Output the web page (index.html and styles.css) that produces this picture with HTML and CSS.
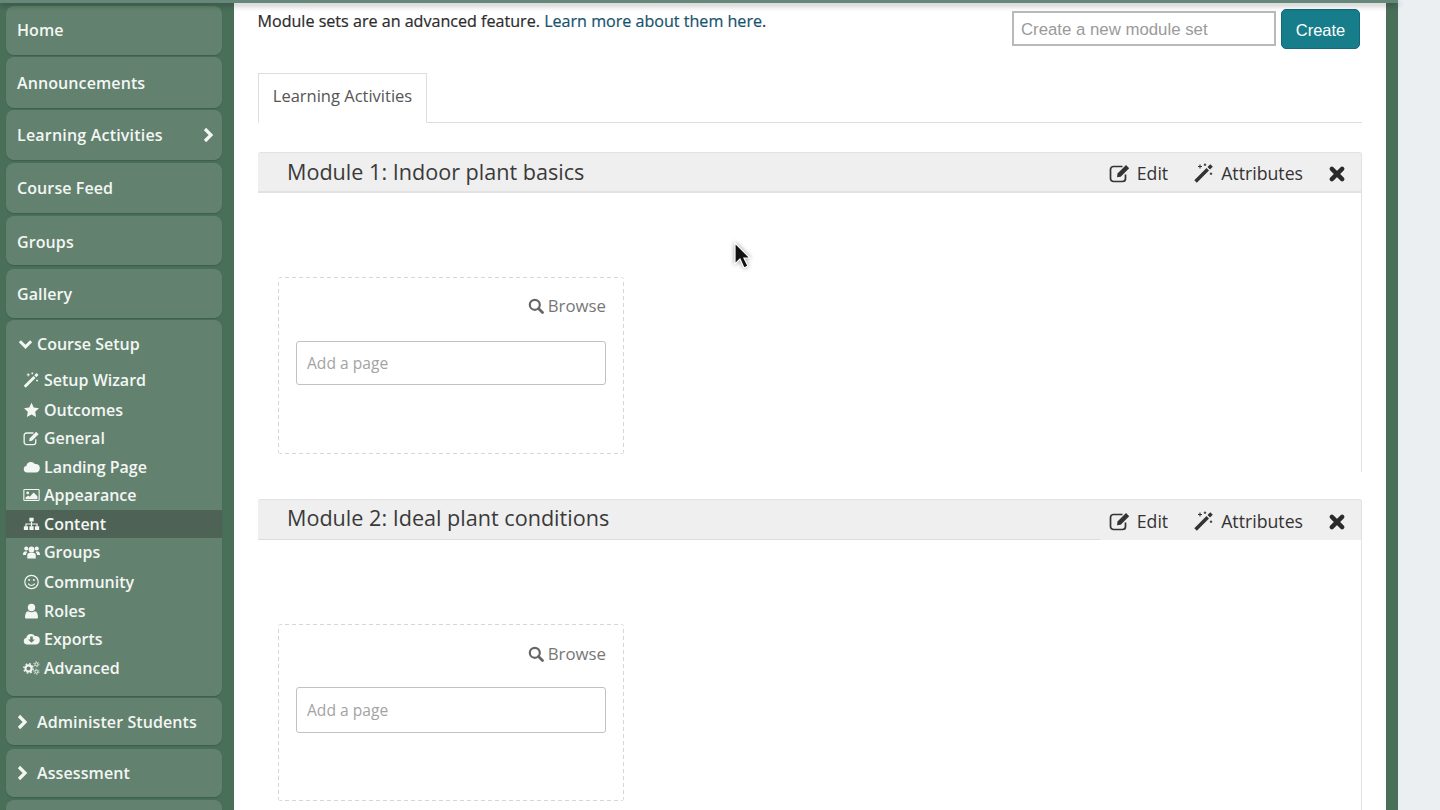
FILE: index.html
```html
<!DOCTYPE html>
<html lang="en">
<head>
    <meta charset="UTF-8">
    <title>Course Setup - Content</title>
    <link rel="stylesheet" href="styles.css">
</head>
<body>
    <svg class="icon-defs" width="0" height="0">
        <symbol id="i-right" viewBox="0 0 12 16"><path d="M3 2l6 6-6 6" fill="none" stroke="currentColor" stroke-width="3.2"/></symbol>
        <symbol id="i-down" viewBox="0 0 16 12"><path d="M2 3l6 6 6-6" fill="none" stroke="currentColor" stroke-width="3.2"/></symbol>
        <symbol id="i-wand" viewBox="0 0 20 20"><path d="M.3 17.200L12.500 5 15 7.500 2.800 19.700zM13.500 4l2.800-2.800 2.500 2.500-2.800 2.800z" fill="currentColor"/><path d="M6 1.500v4M4 3.500h4M11 .5v2.500M9.800 1.700h2.400M17 9.500v2.500M15.800 10.700h2.400" stroke="currentColor" stroke-width="1.100"/></symbol>
        <symbol id="i-star" viewBox="0 0 20 20"><path d="M10 1l2.800 5.900 6.500.9-4.700 4.500 1.200 6.400L10 15.600l-5.800 3.100 1.200-6.400L.7 7.800l6.500-.9z" fill="currentColor"/></symbol>
        <symbol id="i-edit" viewBox="0 0 22 20"><path d="M16.500 11.500v4a3 3 0 0 1-3 3h-9a3 3 0 0 1-3-3v-9a3 3 0 0 1 3-3h9" fill="none" stroke="currentColor" stroke-width="1.700"/><path d="M8.500 10.500L17 2l3.200 3.200-8.500 8.500-3.700.6z" fill="currentColor"/></symbol>
        <symbol id="i-cloud" viewBox="0 0 20 16"><path d="M5 14.500a4 4 0 0 1-1-7.900A5.500 5.500 0 0 1 14 4.500a3.500 3.500 0 0 1 1.700.1A5 5 0 0 1 15 14.500z" fill="currentColor"/></symbol>
        <symbol id="i-image" viewBox="0 0 20 16"><rect x="1" y="1.500" width="18" height="13" rx="1" fill="none" stroke="currentColor" stroke-width="1.300"/><circle cx="5.500" cy="5.500" r="1.600" fill="currentColor"/><path d="M3 13v-2l3-2.500 2 1.500 4.500-5 4.500 4.500V13z" fill="currentColor"/></symbol>
        <symbol id="i-sitemap" viewBox="0 0 20 16"><path d="M7.500 .5h5V5h-5zM1 10.500h5V15H1zM7.500 10.500h5V15h-5zM14 10.500h5V15h-5z" fill="currentColor"/><path d="M3.500 11V8h13v3M10 5v6" fill="none" stroke="currentColor" stroke-width="1.400"/></symbol>
        <symbol id="i-users" viewBox="0 0 20 16"><circle cx="10" cy="5" r="3.400" fill="currentColor"/><circle cx="3.800" cy="3.800" r="2.400" fill="currentColor"/><circle cx="16.200" cy="3.800" r="2.400" fill="currentColor"/><path d="M5 15.500v-4c0-1.800 1.700-3 5-3s5 1.200 5 3v4zM0 10.500c0-2.300 1.300-3.500 4-3.500l1 1.200c-1 .8-1.500 1.700-1.500 3.300H0zM20 10.500c0-2.300-1.300-3.500-4-3.500l-1 1.200c1 .8 1.500 1.700 1.500 3.300H20z" fill="currentColor"/></symbol>
        <symbol id="i-smile" viewBox="0 0 16 16"><circle cx="8" cy="8" r="6.700" fill="none" stroke="currentColor" stroke-width="1.200"/><circle cx="5.600" cy="6" r="1" fill="currentColor"/><circle cx="10.400" cy="6" r="1" fill="currentColor"/><path d="M4.700 9.700c1.700 2.300 4.900 2.300 6.600 0" fill="none" stroke="currentColor" stroke-width="1.100"/></symbol>
        <symbol id="i-user" viewBox="0 0 14 16"><circle cx="7" cy="4.500" r="3.700" fill="currentColor"/><path d="M1.500 15.500a1 1 0 0 1-1-1c0-3.500 1-6 3.200-6.300 1.800 1.300 4.800 1.300 6.600 0 2.200.3 3.200 2.800 3.200 6.300a1 1 0 0 1-1 1z" fill="currentColor"/></symbol>
        <symbol id="i-export" viewBox="0 0 20 16"><path fill-rule="evenodd" d="M5 14.500a4 4 0 0 1-1-7.900A5.500 5.500 0 0 1 14 4.500a3.500 3.500 0 0 1 1.700.1A5 5 0 0 1 15 14.500zM8.500 5v3.500H6l4 4 4-4h-2.500V5z" fill="currentColor"/></symbol>
        <symbol id="i-cogs" viewBox="0 0 20 16"><circle cx="6.500" cy="8.500" r="3.600" fill="none" stroke="currentColor" stroke-width="2.400"/><circle cx="6.500" cy="8.500" r="5.500" fill="none" stroke="currentColor" stroke-width="1.600" stroke-dasharray="2.100 2.220"/><circle cx="15.800" cy="3.600" r="1.700" fill="none" stroke="currentColor" stroke-width="1.100"/><circle cx="15.800" cy="3.600" r="3" fill="none" stroke="currentColor" stroke-width="1" stroke-dasharray="1.500 1.640"/><circle cx="15.800" cy="12.400" r="1.700" fill="none" stroke="currentColor" stroke-width="1.100"/><circle cx="15.800" cy="12.400" r="3" fill="none" stroke="currentColor" stroke-width="1" stroke-dasharray="1.500 1.640"/></symbol>
        <symbol id="i-search" viewBox="0 0 16 16"><circle cx="6.800" cy="6.800" r="5" fill="none" stroke="currentColor" stroke-width="2.200"/><path d="M10.500 10.500l4 4" stroke="currentColor" stroke-width="2.800" stroke-linecap="round"/></symbol>
        <symbol id="i-close" viewBox="0 0 14 14"><path d="M2.500 2.500l9 9M11.500 2.500l-9 9" stroke="currentColor" stroke-width="3.800" stroke-linecap="round"/></symbol>
    </svg>

    <div class="topbar"></div>

    <div class="page">
        <nav class="sidebar">
            <a class="tile tile-home">Home</a>
            <a class="tile tile-ann">Announcements</a>
            <a class="tile tile-la">Learning Activities <svg class="caret-end"><use href="#i-right"/></svg></a>
            <a class="tile tile-feed">Course Feed</a>
            <a class="tile tile-groups">Groups</a>
            <a class="tile tile-gallery">Gallery</a>

            <div class="tile-group">
                <div class="group-title"><svg class="caret-down"><use href="#i-down"/></svg> Course Setup</div>
                <a class="sub sub-wizard"><svg class="sub-icon"><use href="#i-wand"/></svg>Setup Wizard</a>
                <a class="sub sub-outcomes"><svg class="sub-icon"><use href="#i-star"/></svg>Outcomes</a>
                <a class="sub sub-general"><svg class="sub-icon"><use href="#i-edit"/></svg>General</a>
                <a class="sub"><svg class="sub-icon"><use href="#i-cloud"/></svg>Landing Page</a>
                <a class="sub"><svg class="sub-icon"><use href="#i-image"/></svg>Appearance</a>
                <a class="sub active"><svg class="sub-icon"><use href="#i-sitemap"/></svg>Content</a>
                <a class="sub"><svg class="sub-icon"><use href="#i-users"/></svg>Groups</a>
                <a class="sub sub-community"><svg class="sub-icon"><use href="#i-smile"/></svg>Community</a>
                <a class="sub"><svg class="sub-icon"><use href="#i-user"/></svg>Roles</a>
                <a class="sub"><svg class="sub-icon"><use href="#i-export"/></svg>Exports</a>
                <a class="sub"><svg class="sub-icon"><use href="#i-cogs"/></svg>Advanced</a>
            </div>

            <a class="tile tile-admin"><svg class="caret-start"><use href="#i-right"/></svg>Administer Students</a>
            <a class="tile tile-assess"><svg class="caret-start"><use href="#i-right"/></svg>Assessment</a>
            <a class="tile tile-last"></a>
        </nav>

        <main class="content">
            <div class="intro">
                <p class="intro-text">Module sets are an advanced feature. <a class="link">Learn more about them here</a>.</p>
                <div class="new-set">
                    <input class="new-set-input" type="text" placeholder="Create a new module set">
                    <button class="btn-create">Create</button>
                </div>
            </div>

            <div class="tabs">
                <div class="tab">Learning Activities</div>
            </div>

            <section class="module module-first">
                <header class="module-head">
                    <h2 class="module-title">Module 1: Indoor plant basics</h2>
                    <div class="module-actions">
                        <a class="action action-edit"><svg class="action-icon"><use href="#i-edit"/></svg>Edit</a>
                        <a class="action action-attr"><svg class="action-icon"><use href="#i-wand"/></svg>Attributes</a>
                        <a class="action-close"><svg class="close-icon"><use href="#i-close"/></svg></a>
                    </div>
                </header>
                <div class="module-body">
                    <div class="dropzone">
                        <a class="browse"><svg class="browse-icon"><use href="#i-search"/></svg>Browse</a>
                        <input class="page-input" type="text" placeholder="Add a page">
                    </div>
                </div>
            </section>

            <section class="module module-second">
                <header class="module-head">
                    <h2 class="module-title">Module 2: Ideal plant conditions</h2>
                    <div class="module-actions">
                        <a class="action action-edit"><svg class="action-icon"><use href="#i-edit"/></svg>Edit</a>
                        <a class="action action-attr"><svg class="action-icon"><use href="#i-wand"/></svg>Attributes</a>
                        <a class="action-close"><svg class="close-icon"><use href="#i-close"/></svg></a>
                    </div>
                </header>
                <div class="module-body">
                    <div class="dropzone">
                        <a class="browse"><svg class="browse-icon"><use href="#i-search"/></svg>Browse</a>
                        <input class="page-input" type="text" placeholder="Add a page">
                    </div>
                </div>
            </section>
        </main>

        <div class="edge-stripe"></div>
        <div class="page-bg"></div>
    </div>

    <!-- mouse pointer captured in the recording -->
    <svg class="cursor" width="18" height="30" viewBox="0 0 18 30">
        <path d="M2 1v21l5-5 4 9 4-2-4-8h6z" fill="#111" stroke="#fff" stroke-width="1.200"/>
    </svg>
</body>
</html>
```

FILE: styles.css
```css
* { box-sizing: border-box; }
html, body { height: 810px; overflow: hidden; }
body { margin: 0; background: #eceff2; font-family: "Open Sans", sans-serif; color: #333; }
.icon-defs { position: absolute; }

.topbar { position: relative; z-index: 2; width: 1398px; height: 3px; background: #66887a; box-shadow: 0 2px 6px rgba(0,0,0,0.4); }
.page { display: flex; height: 807px; }

/* sidebar */
.sidebar { width: 234px; flex: none; background: #4a6f59; padding: 3px 12px 0 6px; display: flex; flex-direction: column; }
.tile { display: flex; align-items: center; padding-left: 11px; flex: none; background: #62826f; border-radius: 8px; box-shadow: 0 1px 1px rgba(40,70,50,0.35); color: #f4f6f4; font-size: 16px; font-weight: 600; letter-spacing: 0.1px; }
.tile-home { height: 49px; margin-bottom: 2px; padding-bottom: 2px; }
.tile-ann { height: 51px; margin-bottom: 2px; }
.tile-la { height: 50px; margin-bottom: 3px; position: relative; letter-spacing: 0.2px; }
.tile-feed { height: 50px; margin-bottom: 3px; }
.tile-groups { height: 49px; margin-bottom: 4px; padding-top: 2px; }
.tile-gallery { height: 49px; margin-bottom: 2px; }
.tile-admin { height: 47px; margin-top: 2px; margin-bottom: 4px; }
.tile-assess { height: 48px; margin-bottom: 3px; }
.tile-last { height: 48px; }
.caret-end { position: absolute; right: 8px; top: 17px; width: 12px; height: 16px; }
.caret-start { width: 12px; height: 16px; margin-right: 9px; margin-left: -1px; }

.tile-group { flex: none; height: 376px; background: #62826f; border-radius: 8px; box-shadow: 0 1px 1px rgba(40,70,50,0.35); color: #f4f6f4; font-weight: 600; }
.group-title { display: flex; align-items: center; height: 47px; padding: 0 0 0 12px; font-size: 16px; }
.caret-down { width: 15px; height: 12px; margin-right: 4px; }
.sub { display: flex; align-items: center; height: 28.500px; padding-left: 17px; font-size: 16px; }
.sub-wizard { height: 30px; margin-top: -2px; }
.sub-outcomes { height: 29px; }
.sub-community { height: 30px; }
.sub.active { background: #4e6356; }
.sub-icon { width: 17px; height: 16px; margin-right: 4px; flex: none; }

/* main column */
.content { width: 1152px; flex: none; background: #fff; padding: 0 24px; }
.intro { display: flex; justify-content: space-between; height: 70px; }
.intro-text { margin: 7px 0 0 -0.5px; font-size: 16.100px; line-height: 22px; color: #2b2b2b; -webkit-text-stroke: 0.2px; }
.link { color: #14536f; }
.new-set { display: flex; align-items: flex-start; padding: 6px 2px 0 0; gap: 5px; }
.new-set-input { width: 264px; height: 35px; margin-top: 2px; border: 2px solid #b9b9b9; padding: 2px 7px 0; font-family: "Liberation Sans", sans-serif; font-size: 16.800px; }
.new-set-input::placeholder { color: #9a9a9a; opacity: 1; }
.btn-create { width: 79px; height: 40px; background: #177d8a; border: 1px solid #11697a; border-radius: 5px; color: #fff; font-family: "Liberation Sans", sans-serif; font-size: 16.500px; padding: 2px 0 0; }

.tabs { height: 50px; border-bottom: 1px solid #ddd; width: 1104px; }
.tab { width: 169px; height: 50px; background: #fff; border: 1px solid #ddd; border-bottom-color: #fff; padding-top: 11px; text-align: center; font-size: 16.500px; line-height: 22px; color: #555; }

/* modules */
.module { width: 1104px; }
.module-first { margin-top: 29px; }
.module-second { margin-top: 27px; }
.module-head { display: flex; justify-content: space-between; align-items: center; height: 41px; background: #efefef; border-radius: 3px 3px 0 0; border-top: 1px solid #e2e2e2; border-right: 1px solid #e2e2e2; border-bottom: 2px solid #e2e2e2; padding: 0 16px 0 29px; }
.module-second .module-head { border-bottom: none; background: linear-gradient(#dcdcdc, #dcdcdc) no-repeat 0 100% / 842px 1px, #efefef; }
.module-title { margin: -1px 0 0; font-size: 21.600px; font-weight: 400; line-height: 30px; color: #3a3a3a; }
.module-second .module-title { margin-top: -5px; }
.module-actions { display: flex; align-items: center; font-size: 17.700px; color: #333; padding-top: 2px; }
.action { display: flex; align-items: center; }
.action-edit { margin-right: 25px; }
.action-attr { margin-right: 26px; }
.action-icon { width: 22px; height: 20px; margin-right: 6px; }
.action-close { padding-top: 2px; }
.close-icon { display: block; width: 16px; height: 16px; color: #2b2b2b; }
.module-body { height: 279px; border-right: 1px solid #e2e2e2; padding: 84px 0 0 20px; }
.module-second .module-body { height: 300px; }

.dropzone {
    width: 346px; height: 177px; border-radius: 3px; padding: 17px 18px 0; display: flex; flex-direction: column;
    background:
        repeating-linear-gradient(90deg, #d3d6dc 0 4px, transparent 4px 7px) top / 100% 1px no-repeat,
        repeating-linear-gradient(90deg, #d3d6dc 0 4px, transparent 4px 7px) bottom / 100% 1px no-repeat,
        repeating-linear-gradient(0deg, #d3d6dc 0 4px, transparent 4px 7px) left / 1px 100% no-repeat,
        repeating-linear-gradient(0deg, #d3d6dc 0 4px, transparent 4px 7px) right / 1px 100% no-repeat;
}
.module-second .dropzone { padding-top: 18px; }
.browse { align-self: flex-end; display: flex; align-items: center; font-size: 16.800px; line-height: 24px; color: #777; margin-bottom: 23px; }
.module-second .browse { margin-bottom: 21px; }
.browse-icon { width: 16px; height: 16px; margin-right: 4px; color: #666; }
.page-input { width: 310px; height: 44px; border: 1px solid #bfc1c6; border-radius: 3px; padding: 0 10px; font-family: "Open Sans", sans-serif; font-size: 15.600px; }
.module-second .page-input { height: 46px; }
.page-input::placeholder { color: #a3a3a3; opacity: 1; }

.edge-stripe { width: 12px; flex: none; background: #4a6f59; }
.page-bg { flex: 1; background: #eceff2; }

.cursor { position: absolute; left: 733px; top: 242px; filter: drop-shadow(0 0 2px rgba(0,0,0,0.4)); }
```
